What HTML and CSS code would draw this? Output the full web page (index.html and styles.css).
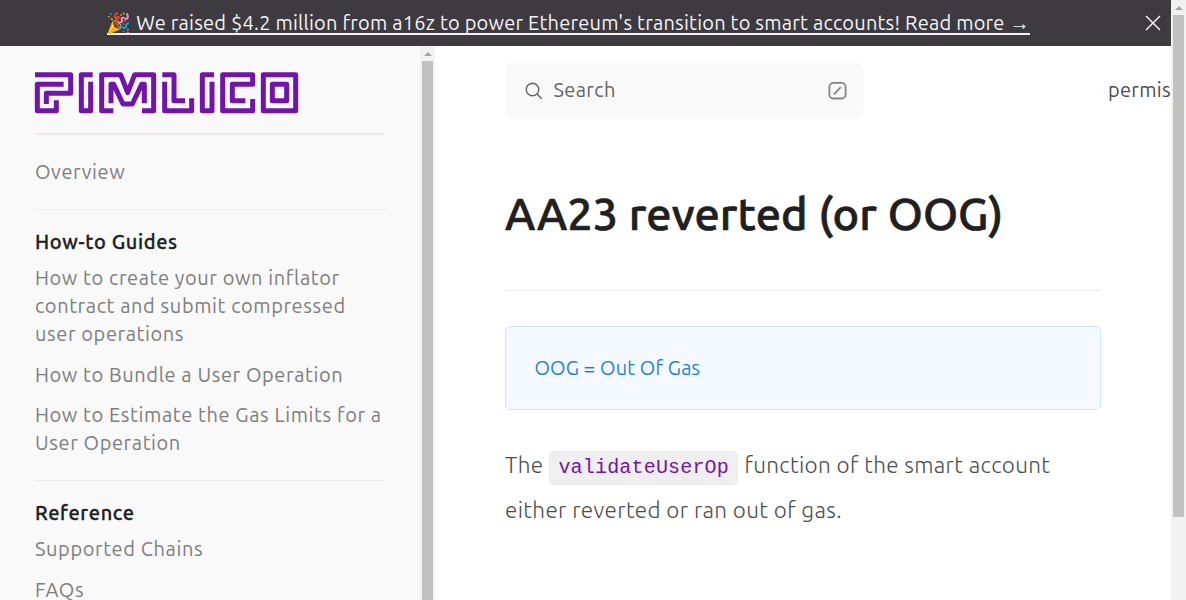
FILE: index.html
```
<!DOCTYPE html>
<html lang="en">
<head>
<meta charset="utf-8">
<title>AA23 reverted (or OOG)</title>
<link rel="stylesheet" href="styles.css">
</head>
<body>
<div class="window">
  <div class="page">
    <header class="banner">
      <a class="banner-link"><span class="emoji">🎉</span><span class="banner-text"> We raised $4.2 million from a16z to power Ethereum's transition to smart accounts! Read more →</span></a>
      <svg class="close" viewBox="0 0 16 16"><path d="M1 1 15 15M15 1 1 15"/></svg>
    </header>
    <div class="columns">
      <aside class="sidebar">
        <div class="brand">
          <svg class="logo" viewBox="45 36 789 123">
            <path d="M45 44H152V100H79V132M131 73H52V152H109V121"/>
            <path d="M218 44H184V152H212V65"/>
            <path d="M280 152H245V44H302L323 98 344 44H401V152H366M273 130V73H281L309 132H337L365 73H373V130"/>
            <path d="M427 44H462V122H495M434 65V152H515V115"/>
            <path d="M582 44H547V152H576V65"/>
            <path d="M698 117V152H608V44H698V73H637V122H676"/>
            <path d="M730 44H827V152H730ZM757 73H800V122H757Z"/>
          </svg>
        </div>
        <nav>
          <section class="group"><a>Overview</a></section>
          <section class="group">
            <h2>How-to Guides</h2>
            <a>How to create your own inflator<br>contract and submit compressed<br>user operations</a>
            <a>How to Bundle a User Operation</a>
            <a>How to Estimate the Gas Limits for a<br>User Operation</a>
          </section>
          <section class="group">
            <h2>Reference</h2>
            <a>Supported Chains</a>
            <a>FAQs</a>
          </section>
        </nav>
      </aside>
      <div class="scrollbar side-scroll"><i class="arrow"></i><i class="thumb"></i></div>
      <main class="main">
        <div class="topbar">
          <div class="search">
            <svg class="lens" viewBox="0 0 18 18"><circle cx="7.5" cy="7.5" r="6.2"/><path d="M12 12 16.7 16.7"/></svg>
            <span>Search</span>
            <svg class="slash" viewBox="0 0 18 18"><rect x="0.9" y="0.9" width="16.2" height="15.6" rx="4"/><path d="M5.5 12.4 12.3 5.2"/></svg>
          </div>
          <span class="toplink">permis</span>
        </div>
        <article class="article">
          <h1>AA23 reverted (or OOG)</h1>
          <div class="callout">OOG = Out Of Gas</div>
          <p>The<code>validateUserOp</code>function of the smart account<br>either reverted or ran out of gas.</p>
        </article>
      </main>
    </div>
  </div>
  <div class="scrollbar page-scroll"><i class="arrow"></i><i class="thumb"></i></div>
</div>
</body>
</html>
```
FILE: styles.css
```
* { box-sizing: border-box; }
body { margin: 0; font-family: Ubuntu, "Noto Sans", sans-serif; background: #fff; overflow: hidden; }
.window { display: flex; width: 1186px; height: 600px; overflow: hidden; }
.page { width: 1171px; height: 600px; overflow: hidden; display: flex; flex-direction: column; }
.banner { height: 46px; flex: none; background: #3d3a40; display: flex; align-items: center; padding-left: 107px; color: #f4f2f5; }
.banner-link { display: flex; width: 923px; height: 24px; line-height: 24px; font-size: 20px; border-bottom: 2px solid #f4f2f5; white-space: pre; margin-top: -1px; }
.banner-text { letter-spacing: 0.22px; }
.emoji { font-size: 20px; width: 24.5px; margin-left: -1px; margin-right: 1px; font-family: "Noto Color Emoji", sans-serif; }
.close { width: 16px; height: 16px; margin-left: 115px; fill: none; stroke: #fff; stroke-width: 1.4; }
.columns { display: flex; height: 554px; overflow: hidden; }
.sidebar { width: 420px; flex: none; background: #f9f9f9; padding: 0 35px; overflow: hidden; }
.brand { height: 89px; padding-top: 26px; border-bottom: 2px solid #ebebeb; }
.logo { display: block; width: 263px; height: 41px; fill: none; stroke: #7115aa; stroke-width: 15; stroke-linejoin: round; overflow: visible; }
.group { padding: 18px 0 16px; }
.group + .group { border-top: 1px solid #ebebeb; padding-top: 18px; }
.group:first-child { height: 74px; padding-top: 23px; }
.group:nth-child(2) { height: 271px; }
.group a { display: block; color: #7e7e7e; font-size: 20px; line-height: 28px; margin-bottom: 12.5px; white-space: nowrap; letter-spacing: 0.6px; }
.group h2 { margin: 0 0 8px; font-size: 20px; line-height: 28px; font-weight: 500; color: #202020; white-space: nowrap; letter-spacing: 0.63px; -webkit-text-stroke: 0.3px #202020; }
.scrollbar { width: 15px; flex: none; background: #f1f1f1; display: flex; flex-direction: column; align-items: center; }
.arrow { border: 4px solid transparent; border-top: 0; border-bottom: 4px solid #a3a3a3; margin: 6px 0 5px; }
.thumb { width: 11px; height: 502px; background: #c1c1c1; flex: none; }
.side-scroll { overflow: hidden; }
.side-scroll .thumb { height: 600px; }
.main { width: 736px; flex: none; overflow: hidden; padding-left: 70px; }
.topbar { display: flex; align-items: center; margin-top: 15px; height: 58px; white-space: nowrap; font-size: 20px; color: #4c4c4c; }
.search { display: flex; align-items: center; flex: none; width: 359px; height: 58px; background: #f9f9f9; border-radius: 12px; padding: 0 17px 0 20px; color: #646464; }
.search span { margin-top: -2px; letter-spacing: 0.35px; }
.lens { width: 18px; height: 18px; margin: 2px 10.5px 0 0; fill: none; stroke: #646464; stroke-width: 1.4; }
.slash { width: 19px; height: 18px; margin: 2px 0 0 auto; fill: none; stroke: #848484; stroke-width: 1.8; }
.toplink { margin: -2px 0 0 244px; letter-spacing: 0.3px; }
.article { width: 596px; }
h1 { margin: 0; height: 172px; padding-top: 64px; font-size: 45px; line-height: 62px; font-weight: 500; letter-spacing: 0.08px; color: #202020; -webkit-text-stroke: 0.7px #202020; border-bottom: 1px solid #ebebeb; white-space: nowrap; }
.callout { margin-top: 35px; height: 84px; padding-left: 28.5px; border: 1px solid #c9e9fd; border-radius: 5px; background: #f4f9ff; color: #1479d2; font-size: 20px; font-weight: 300; line-height: 82px; letter-spacing: 0.2px; -webkit-text-stroke: 0.15px #1479d2; }
p { margin: 32px 0 0; font-size: 22.5px; line-height: 45px; font-weight: 300; color: #4c4c4c; white-space: nowrap; letter-spacing: 0.34px; }
code { display: inline-block; height: 34px; margin: 0 6px; padding: 0 8px; font: 20px/32px "Liberation Mono", monospace; letter-spacing: 0.18px; color: #7115aa; background: #efefef; border: 1px solid #ededed; border-radius: 5px; width: 189px; }
```
